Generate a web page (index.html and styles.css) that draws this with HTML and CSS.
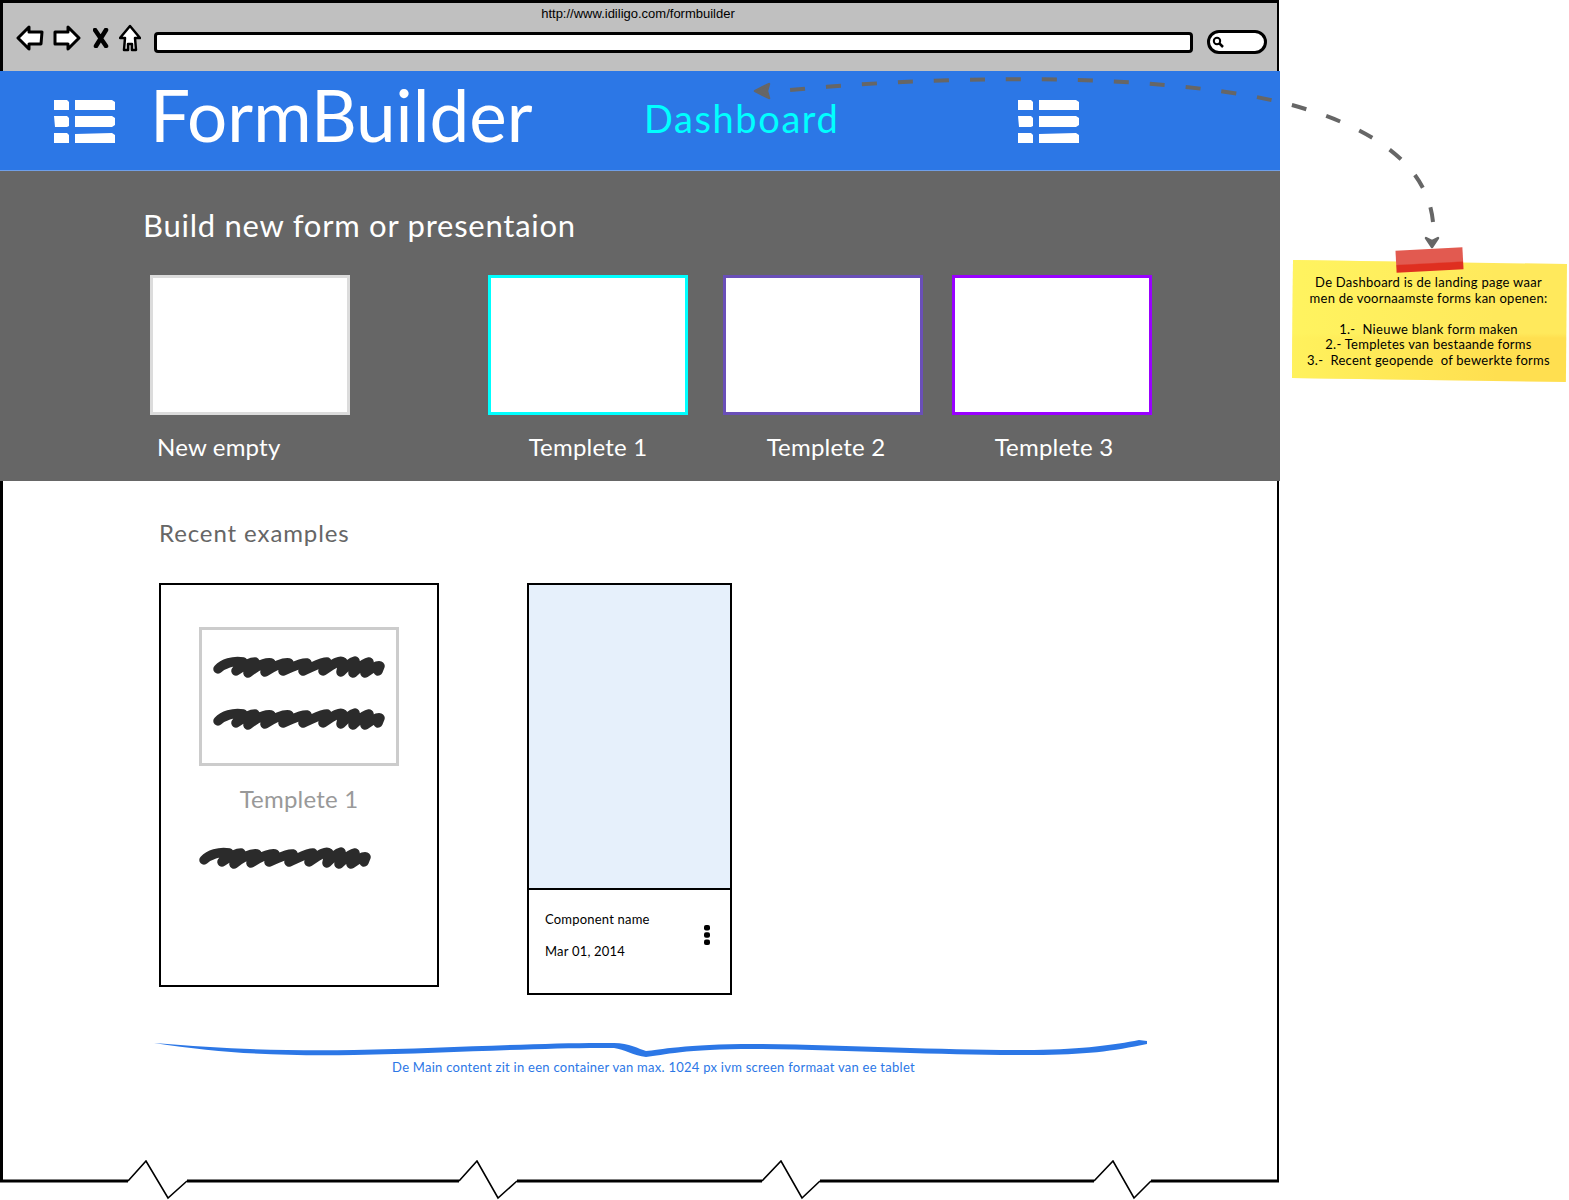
FILE: index.html
```html
<!DOCTYPE html>
<html lang="en">
<head>
    <meta charset="UTF-8">
    <title>FormBuilder wireframe</title>
    <link rel="stylesheet" href="styles.css">
</head>
<body>
    <svg class="sprites" width="0" height="0">
        <symbol id="scribble" viewBox="0 0 172 24">
            <path d="M5 15C10 10 20 6 30 8L23 17C30 12 36 8 42 8L35 19C44 12 52 8 58 9L52 18C60 13 70 8 76 9L70 17C80 13 88 8 94 9L90 17C100 13 108 8 114 8L110 17C118 12 126 5 130 8L128 18C134 12 138 8 142 7L140 19C146 14 150 9 156 8L152 19C158 15 164 11 167 12L165 17" fill="none" stroke="#2b2b2b" stroke-width="9.5" stroke-linecap="round" stroke-linejoin="round"/>
        </symbol>
        <symbol id="list" viewBox="0 0 61 43">
            <path d="M0 0L13 0L15 2V10H0ZM21 0H58L61 2V10H58L21 10ZM0 16H13L15 18V26L13 27H1ZM21 16H58L61 18V25L58 27H21ZM0 33H13L15 35V43H0ZM21 34L58 33L61 35V43H21Z" fill="#fff"/>
        </symbol>
    </svg>

    <div class="wireframe">
        <div class="browser-bar">
            <div class="url-text">http://www.idiligo.com/formbuilder</div>
            <div class="browser-tools">
                <svg class="tool-icon" width="28" height="26" viewBox="0 0 28 26">
                    <path d="M2 13L13 2V7H26L25 19H13V24Z" fill="#fff" stroke="#000" stroke-width="3" stroke-linejoin="round"/>
                </svg>
                <svg class="tool-icon" width="28" height="26" viewBox="0 0 28 26">
                    <path d="M26 13L15 2V7H2L2 19H15V24Z" fill="#fff" stroke="#000" stroke-width="3" stroke-linejoin="round"/>
                </svg>
                <svg class="tool-icon" width="16" height="20" viewBox="0 0 16 20">
                    <path d="M2 2L13 18M13 2L3 18" fill="none" stroke="#000" stroke-width="4.5" stroke-linecap="round"/>
                </svg>
                <svg class="tool-icon" width="22" height="28" viewBox="0 0 22 28">
                    <path d="M11 2L21 14H16L17 26H13V20H9V26H5L6 14H1Z" fill="#fff" stroke="#000" stroke-width="2.5" stroke-linejoin="round"/>
                </svg>
                <div class="address-field"></div>
                <div class="search-pill">
                    <svg width="12" height="12" viewBox="0 0 12 12">
                        <circle cx="5" cy="5" r="3.2" fill="#fff" stroke="#000" stroke-width="2"/>
                        <path d="M7.5 7.5L11 11" stroke="#000" stroke-width="2.5"/>
                    </svg>
                </div>
            </div>
        </div>

        <header class="app-header">
            <svg class="list-icon" width="61" height="43"><use href="#list"/></svg>
            <div class="logo">FormBuilder</div>
            <div class="page-name">Dashboard</div>
            <svg class="list-icon" width="61" height="43"><use href="#list"/></svg>
        </header>

        <section class="new-form">
            <h1>Build new form or presentaion</h1>
            <div class="tiles">
                <div class="tile tile-new">
                    <div class="tile-box"></div>
                    <div class="tile-label">New empty</div>
                </div>
                <div class="tile tile-one">
                    <div class="tile-box"></div>
                    <div class="tile-label">Templete 1</div>
                </div>
                <div class="tile tile-two">
                    <div class="tile-box"></div>
                    <div class="tile-label">Templete 2</div>
                </div>
                <div class="tile tile-three">
                    <div class="tile-box"></div>
                    <div class="tile-label">Templete 3</div>
                </div>
            </div>
        </section>

        <main class="main-content">
            <h2>Recent examples</h2>
            <div class="recent-cards">
                <div class="template-card">
                    <div class="template-preview">
                        <svg width="172" height="24"><use href="#scribble"/></svg>
                        <svg width="172" height="24"><use href="#scribble"/></svg>
                    </div>
                    <div class="template-name">Templete 1</div>
                    <svg class="template-scribble" width="172" height="24"><use href="#scribble"/></svg>
                </div>
                <div class="component-card">
                    <div class="component-image"></div>
                    <div class="component-foot">
                        <div class="component-text">
                            <div>Component name</div>
                            <div>Mar 01, 2014</div>
                        </div>
                        <svg class="component-menu" width="6" height="20" viewBox="0 0 6 20">
                            <rect x="0" y="0" width="6" height="5.6" rx="2"/>
                            <rect x="0" y="7.2" width="6" height="5.6" rx="2"/>
                            <rect x="0" y="14.4" width="6" height="5.6" rx="2"/>
                        </svg>
                    </div>
                </div>
            </div>
            <div class="width-note">
                <svg width="994" height="18" viewBox="0 0 994 18">
                    <path d="M0 3C70 9 130 11 200 10C300 8 400 2 460 3C475 3 485 9 492 11C505 10 530 4 600 4C700 5 800 11 880 10C930 9 960 5 985 0L993 1L993 4C960 11 930 15 880 15C800 16 700 10 600 9C530 9 510 15 492 17C480 16 470 9 460 8C400 7 300 13 200 15C130 16 70 14 0 3Z" fill="#2c77e6"/>
                </svg>
                <div class="width-note-text">De Main content zit in een container van max. 1024 px ivm screen formaat van ee tablet</div>
            </div>
        </main>

        <svg class="torn-edge" width="1279" height="40" viewBox="0 0 1279 40">
            <path d="M0 21H128M187 21H459M517 21H762M820 21H1094M1151 21H1279" fill="none" stroke="#000" stroke-width="3"/>
            <path d="M128 21L146 1L168 38L187 21M459 21L477 1L498 38L517 21M762 21L781 1L802 38L820 21M1094 21L1113 1L1134 38L1151 21" fill="none" stroke="#000" stroke-width="1.6"/>
        </svg>
    </div>

    <!-- annotation on top of the wireframe -->
    <svg class="arrow-layer" width="1569" height="300" viewBox="0 0 1569 300">
        <path d="M1433 222C1428 170 1382 130 1292 105C1182 76 982 72 790 90" fill="none" stroke="#666" stroke-width="4" stroke-dasharray="15 21"/>
        <path d="M755 91L769 84L767 91L769 98Z" fill="#666" stroke="#666" stroke-width="2.5" stroke-linejoin="round"/>
        <path d="M1426 238L1432 247L1438 238L1432 241Z" fill="#666" stroke="#666" stroke-width="2.5" stroke-linejoin="round"/>
    </svg>

    <aside class="sticky-note">
        <div class="sticky-tape"></div>
        <p>De Dashboard is de landing page waar</p>
        <p>men de voornaamste forms kan openen:</p>
        <p class="note-gap">1.-&nbsp; Nieuwe blank form maken</p>
        <p>2.- Templetes van bestaande forms</p>
        <p>3.-&nbsp; Recent geopende&nbsp; of bewerkte forms</p>
    </aside>
</body>
</html>
```

FILE: styles.css
```css
/* Dashboard wireframe */
body {
    margin: 0;
    height: 1200px;
    position: relative;
    overflow: hidden;
    background-color: #ffffff;
    font-family: Lato, "Open Sans", sans-serif;
    color: #000000;
}

.sprites {
    position: absolute;
}

.wireframe {
    width: 1280px;
}

/* browser chrome */
.browser-bar {
    box-sizing: border-box;
    width: 1279px;
    height: 71px;
    background-color: #c0c0c0;
    border: 3px solid #000;
    border-bottom: none;
    border-right-width: 2px;
}

.url-text {
    text-align: center;
    font-family: "Liberation Sans", sans-serif;
    font-size: 13px;
    line-height: 14px;
    padding-top: 4px;
    margin-right: 4px;
}

.browser-tools {
    display: flex;
    align-items: center;
    padding-left: 13px;
    height: 34px;
}

.tool-icon {
    margin-right: 9px;
    flex: none;
}

.tool-icon:nth-child(2) {
    margin-right: 12px;
}

.tool-icon:nth-child(3) {
    margin-right: 10px;
}

.tool-icon:nth-child(4) {
    margin-right: 13px;
}

.address-field {
    box-sizing: border-box;
    width: 1039px;
    height: 21px;
    margin-top: 8px;
    background-color: #fff;
    border: 3px solid #000;
    border-radius: 4px;
}

.search-pill {
    box-sizing: border-box;
    width: 60px;
    height: 24px;
    margin: 7px 0 0 14px;
    padding-left: 2px;
    display: flex;
    align-items: center;
    background-color: #fff;
    border: 3px solid #000;
    border-radius: 12px;
}

/* blue header */
.app-header {
    box-sizing: border-box;
    height: 100px;
    display: flex;
    align-items: center;
    background-color: #2c77e6;
    border-bottom: 1px solid #6f9fe8;
    padding-left: 54px;
}

.list-icon {
    flex: none;
    margin-top: 1px;
}

.logo {
    width: 494px;
    margin: -11px 0 0 35px;
    color: #fff;
    font-size: 71px;
    line-height: 96px;
    white-space: nowrap;
}

.page-name {
    width: 374px;
    margin-top: -5px;
    color: #00ffff;
    font-size: 38px;
    line-height: 46px;
    letter-spacing: 1.6px;
}

/* new form section */
.new-form {
    box-sizing: border-box;
    height: 310px;
    background-color: #666666;
    padding: 35px 0 0 150px;
}

.new-form h1 {
    margin: 0 0 31px -7px;
    color: #fff;
    font-size: 31px;
    font-weight: 400;
    line-height: 38px;
    letter-spacing: 0.75px;
}

.tiles {
    display: flex;
}

.tile {
    width: 200px;
}

.tile-box {
    box-sizing: border-box;
    height: 140px;
    background-color: #fff;
    border: 3px solid #000;
}

.tile-label {
    margin-top: 17px;
    color: #fff;
    font-size: 24px;
    line-height: 30px;
    letter-spacing: 0.2px;
    text-align: center;
}

.tile-new {
    margin-right: 138px;
}

.tile-new .tile-box {
    border-color: #dcdcdc;
}

.tile-new .tile-label {
    text-align: left;
    padding-left: 7px;
}

.tile-one {
    margin-right: 35px;
}

.tile-one .tile-box {
    border-color: #00ffff;
}

.tile-two {
    margin-right: 29px;
}

.tile-two .tile-box {
    border-color: #6a4fb8;
}

.tile-two .tile-label {
    padding-left: 6px;
}

.tile-three .tile-box {
    border-color: #9900ff;
}

.tile-three .tile-label {
    padding-left: 4px;
}

/* recent examples */
.main-content {
    box-sizing: border-box;
    width: 1279px;
    height: 699px;
    border-left: 3px solid #000;
    border-right: 2px solid #000;
    padding: 38px 0 0 156px;
}

.main-content h2 {
    margin: 0;
    color: #666;
    font-size: 24px;
    font-weight: 400;
    line-height: 28px;
    letter-spacing: 0.9px;
}

.recent-cards {
    display: flex;
    align-items: flex-start;
    margin-top: 36px;
}

.template-card {
    box-sizing: border-box;
    width: 280px;
    height: 404px;
    margin-right: 88px;
    border: 2px solid #000;
    display: flex;
    flex-direction: column;
    align-items: center;
}

.template-preview {
    box-sizing: border-box;
    width: 200px;
    height: 139px;
    margin-top: 42px;
    padding-top: 24px;
    display: flex;
    flex-direction: column;
    align-items: center;
    gap: 28px;
    border: 3px solid #ccc;
}

.template-name {
    margin-top: 18px;
    color: #999;
    font-size: 24px;
    line-height: 30px;
    letter-spacing: 0.2px;
}

.template-scribble {
    align-self: flex-start;
    margin: 31px 0 0 38px;
}

.component-card {
    box-sizing: border-box;
    width: 205px;
    height: 412px;
    border: 2px solid #000;
}

.component-image {
    height: 303px;
    background-color: #e6f0fb;
    border-bottom: 2px solid #000;
}

.component-foot {
    display: flex;
    justify-content: space-between;
    padding: 21px 20px 0 16px;
}

.component-text {
    display: flex;
    flex-direction: column;
    gap: 16px;
    font-size: 13px;
    line-height: 16px;
    letter-spacing: 0.2px;
}

.component-menu {
    margin-top: 14px;
}

.width-note {
    width: 994px;
    margin: 45px 0 0 -5px;
}

.width-note svg {
    display: block;
}

.width-note-text {
    margin-top: 1px;
    padding-left: 5px;
    color: #2c77e6;
    font-size: 13px;
    line-height: 16px;
    letter-spacing: 0.26px;
    text-align: center;
}

.torn-edge {
    display: block;
    margin-top: -20px;
}

/* annotation */
.arrow-layer {
    position: absolute;
    left: 0;
    top: 0;
}

.sticky-note {
    position: absolute;
    left: 1292px;
    top: 260px;
    z-index: 0;
    box-sizing: border-box;
    width: 275px;
    height: 122px;
    padding: 15px 2px 0 0;
    font-size: 13px;
    line-height: 15.6px;
    letter-spacing: 0.26px;
    text-align: center;
}

.sticky-note::before {
    content: "";
    position: absolute;
    inset: 0;
    z-index: -1;
    background:
        linear-gradient(90deg, rgba(255, 246, 96, 0.8) 0%, rgba(255, 228, 80, 0) 75%),
        linear-gradient(180deg, #ffe95c 0%, #ffe95c 60%, #ffdf50 64%, #ffdf50 100%);
    clip-path: polygon(1px 0, 100% 4px, 99.6% 100%, 0 calc(100% - 4px));
}

.sticky-note p {
    margin: 0;
}

.sticky-note .note-gap {
    margin-top: 15.6px;
}

.sticky-tape {
    position: absolute;
    left: 104px;
    top: -11px;
    width: 67px;
    height: 22px;
    background: linear-gradient(180deg, #e25a50 0%, #e25a50 62%, #df2f20 68%, #df2f20 100%);
    transform: rotate(-3deg);
}
```
